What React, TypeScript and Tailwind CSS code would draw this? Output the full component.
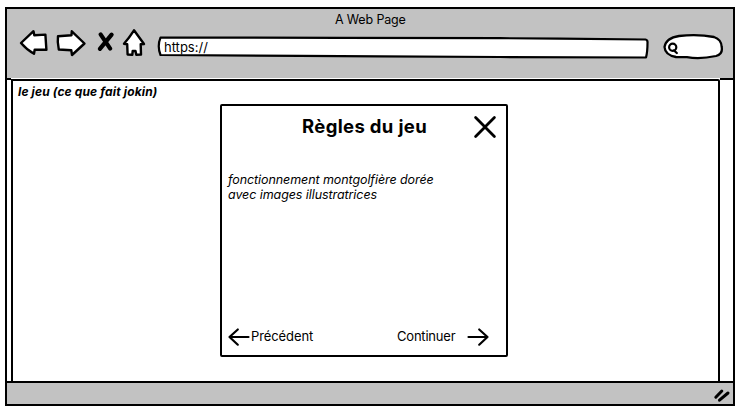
function NavIcons() {
  return (
    <svg className="-mt-[3px] h-[34px] w-[130px] shrink-0" viewBox="18 26 130 34" fill="none" stroke="#000" strokeWidth="2.4" strokeLinejoin="round" strokeLinecap="round">
      <path fill="#fff" d="M21 43 L33.5 31.2 L34.3 35.2 L45.4 34.6 L46.4 49.8 L34.7 49.8 L34 53.7 Q27 50 21 43 Z" />
      <path fill="#fff" d="M58 36.2 L71.5 35.2 L71.8 31.3 L84.5 43.5 L72 55 L71.3 50.3 L58.8 49.5 Q57.2 42 58 36.2 Z" />
      <path fill="#fff" d="M134 30.3 L144 44 L140.7 44.3 L141 54.5 L136.3 54.8 L135.5 51 L132.7 51 L132.3 54.8 L127.6 54.5 L127.2 44.3 L124 43.8 Q129 38 134 30.3 Z" />
      <path strokeWidth="4.2" d="M100.6 34.4 L110.2 48.6 M111.6 34.6 L99.9 48.8" />
    </svg>
  );
}

function AddressBar() {
  return (
    <div className="relative ml-[8px] h-[24px] w-[494px] shrink-0">
      <svg className="absolute inset-0 h-full w-full" viewBox="156 35 494 24">
        <path d="M160.5 37.6 L340 37.8 L500 38.2 L560 38.6 L645.5 39.5 Q647.8 39.8 647.5 43 Q647.5 52 646 57.5 L500 57 L380 56.4 L300 55.9 L160.5 55 Q157 46 160.5 37.6 Z" fill="#fff" stroke="#000" strokeWidth="2.2" strokeLinejoin="round" />
      </svg>
      <span className="absolute left-[8px] top-[4px] text-[13px] leading-[16px]">https://</span>
    </div>
  );
}

function SearchField() {
  return (
    <svg className="ml-[12px] h-[28px] w-[64px] shrink-0" viewBox="662 33 64 28" fill="none" stroke="#000" strokeWidth="2.3">
      <path fill="#fff" d="M664.5 47 Q666 38 679 36 Q698 34 714 37 Q721.5 39.5 721.7 47 Q723 54 716 56 Q700 59.5 687 57.2 L676 57 Q665 55 664.5 47 Z" />
      <circle cx="672.7" cy="47.3" r="3.6" strokeWidth="2.2" />
      <path d="M674 50.5 L676.8 53" strokeLinecap="round" />
    </svg>
  );
}

function Arrow({ flip = false }: { flip?: boolean }) {
  return (
    <svg className={flip ? "h-[20px] w-[24px] -scale-x-100" : "h-[20px] w-[24px]"} viewBox="0 0 24 20" fill="none" stroke="#000" strokeWidth="2.2" strokeLinecap="round" strokeLinejoin="round">
      <path d="M2.5 10 H21.5 M13.2 2.5 L21.5 10 L13.2 17.7" />
    </svg>
  );
}

function Dialog() {
  return (
    <section className="ml-[207px] mt-[4px] flex h-[253px] w-[288px] flex-col rounded-[2px] border-2 border-black bg-white">
      <header className="flex h-[41px] items-center">
        <h1 className="-mt-[1px] ml-[80px] w-[126px] whitespace-nowrap text-[18.5px] font-bold leading-6 tracking-[0.35px]">Règles du jeu</h1>
        <button aria-label="Fermer" className="ml-[45px]">
          <svg className="h-[24px] w-[24px]" viewBox="0 0 24 24" stroke="#000" strokeWidth="2.8" strokeLinecap="round">
            <path d="M2.6 2.6 L21.4 21.4 M21.4 2.6 L2.6 21.4" />
          </svg>
        </button>
      </header>
      <p className="ml-[6px] mt-[25px] whitespace-nowrap text-[12.5px] italic leading-[15px] tracking-[-0.08px]">
        fonctionnement montgolfière dorée<br />avec images illustratrices
      </p>
      <footer className="mb-[8px] mt-auto flex h-[20px] items-center">
        <button className="ml-[5px] flex items-center">
          <Arrow flip />
          <span className="-mt-[3px] w-[64px] text-left text-[13px] leading-4 tracking-[-0.1px]">Précédent</span>
        </button>
        <button className="ml-[82px] flex items-center">
          <span className="-mt-[3px] w-[69px] text-left text-[13px] leading-4 tracking-[-0.2px]">Continuer</span>
          <Arrow />
        </button>
      </footer>
    </section>
  );
}

export default function App() {
  return (
    <div className="h-[414px] w-[745px] overflow-hidden bg-white pl-[5px] pt-[7px] font-['Inter','Liberation_Sans',sans-serif] text-black">
      <div className="flex h-[399px] w-[730px] flex-col border-2 border-black bg-white">
        <header className="h-[69px] shrink-0 bg-[#c2c2c2]">
          <div className="h-[20px] pl-[328px] pt-[3px] text-[12.5px] leading-4 tracking-[-0.15px]">A Web Page</div>
          <div className="flex h-[34px] pl-[11px]">
            <NavIcons />
            <div className="flex items-center pt-[2px]">
              <AddressBar />
              <SearchField />
            </div>
          </div>
        </header>
        <div className="flex h-[305px] shrink-0">
          <div className="w-[4px] shrink-0 border-y-2 border-black" />
          <main className="mt-px w-[709px] shrink-0 rounded-tr-[2px] border-2 border-black">
            <div className="pl-[5px] pt-[3px] text-[12px] font-bold italic leading-[16px] tracking-[0.14px]">le jeu (ce que fait jokin)</div>
            <Dialog />
          </main>
          <div className="flex-1 border-y-2 border-black" />
        </div>
        <footer className="flex flex-1 items-center justify-end bg-[#c2c2c2] pr-[2px] pt-[3px]">
          <svg className="h-[16px] w-[18px]" viewBox="713 387 18 16" stroke="#000" strokeWidth="3" strokeLinecap="round">
            <path d="M715.8 397.2 L721.8 391 M719.5 400.2 L728 393" />
          </svg>
        </footer>
      </div>
    </div>
  );
}
